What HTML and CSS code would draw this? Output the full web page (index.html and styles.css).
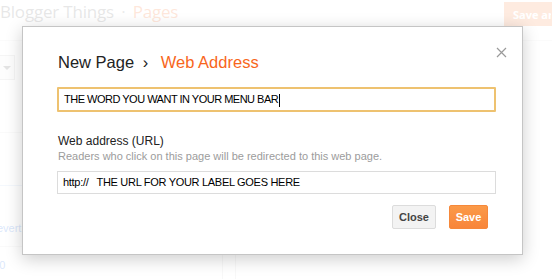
FILE: index.html
```html
<!DOCTYPE html>
<html lang="en">
<head>
  <meta charset="UTF-8">
  <title>Blogger - Pages</title>
  <link rel="stylesheet" href="styles.css">
</head>
<body>
  <div class="page">
    <div class="topbar">
      <h1 class="blog-title">Blogger Things <span class="dot">·</span> <span class="section">Pages</span></h1>
      <button class="save-arr">Save arrangement</button>
    </div>
    <div class="content">
      <div class="side">
        <div class="select"><span class="arrow"></span></div>
        <div class="rule first"></div>
        <div class="rule blue"></div>
        <div class="revert">Revert</div>
        <div class="rule"></div>
        <div class="num">100</div>
      </div>
      <div class="cols">
        <div class="col"></div>
        <div class="col"></div>
      </div>
    </div>
  </div>

  <div class="overlay"></div>

  <div class="dialog">
    <span class="close-x">
      <svg width="11" height="11" viewBox="0 0 11 11"><path d="M1 1L10 10M10 1L1 10" stroke="#9a9a9a" stroke-width="1.2" fill="none"/></svg>
    </span>
    <h2 class="dialog-title">New Page <span class="sep">›</span> <span class="accent">Web Address</span></h2>
    <div class="field focus">THE WORD YOU WANT IN YOUR MENU BAR<span class="caret"></span></div>
    <div class="label">Web address (URL)</div>
    <div class="hint">Readers who click on this page will be redirected to this web page.</div>
    <div class="field url">http://&nbsp;&nbsp; THE URL FOR YOUR LABEL GOES HERE</div>
    <div class="actions">
      <button class="btn">Close</button>
      <button class="btn primary">Save</button>
    </div>
  </div>
</body>
</html>
```

FILE: styles.css
```css
body {
  margin: 0;
  background: #fff;
  font-family: 'Liberation Sans', Arial, sans-serif;
  width: 552px;
  height: 279px;
  overflow: hidden;
  position: relative;
}
.page {
  height: 279px;
}
.topbar {
  display: flex;
  justify-content: space-between;
  align-items: flex-start;
  height: 40px;
  border-bottom: 1px solid #e8e8e8;
}
.blog-title {
  margin: 0;
  padding-top: 1px;
  font-family: 'Open Sans', sans-serif;
  font-weight: normal;
  font-size: 17px;
  line-height: 22px;
  color: #888;
  letter-spacing: -0.2px;
}
.blog-title .dot {
  color: #999;
  margin: 0 3px;
}
.blog-title .section {
  color: #f8864a;
}
.save-arr {
  margin-top: 2px;
  height: 24px;
  padding: 0 8px;
  border: 1px solid #f89a65;
  background: #f99c66;
  color: #fff;
  font-family: 'Open Sans', sans-serif;
  font-weight: bold;
  font-size: 11px;
  white-space: nowrap;
  width: 48px;
  overflow: hidden;
  text-align: left;
}
.content {
  display: flex;
}
.side {
  width: 222px;
  padding-top: 14px;
}
.select {
  width: 14px;
  height: 23px;
  border: 1px solid #ccc;
  border-left: none;
  background: #f5f5f5;
  position: relative;
}
.arrow {
  position: absolute;
  left: 3px;
  top: 10px;
  border-left: 4px solid transparent;
  border-right: 4px solid transparent;
  border-top: 4px solid #777;
}
.rule {
  border-top: 1px solid #e5e5e5;
  margin-top: 52px;
}
.rule.first {
  margin-top: 52px;
}
.rule.blue {
  border-color: #c9dcf5;
}
.revert {
  font-size: 11px;
  color: #4a86e8;
  margin-top: 36px;
  margin-left: -11px;
}
.side .rule:nth-of-type(5) {
  margin-top: 12px;
}
.num {
  font-size: 11px;
  color: #4a86e8;
  margin-top: 12px;
  margin-left: -13px;
}
.cols {
  display: flex;
  gap: 12px;
  padding-top: 213px;
}
.col {
  width: 0;
  height: 30px;
  border-left: 1px solid #ddd;
}
.overlay {
  position: absolute;
  inset: 0;
  background: rgba(255, 255, 255, 0.8);
}
.dialog {
  position: absolute;
  left: 22px;
  top: 26px;
  width: 438px;
  height: 203px;
  padding: 24px 26px 0 35px;
  background: #fff;
  border: 1px solid #c5c5c5;
  box-shadow: 0 4px 16px rgba(0, 0, 0, 0.2);
}
.close-x {
  position: absolute;
  right: 15px;
  top: 20px;
  line-height: 0;
}
.dialog-title {
  margin: 0;
  font-weight: normal;
  font-size: 16.5px;
  line-height: 22px;
  color: #222;
}
.dialog-title .sep {
  margin: 0 8px 0 4px;
}
.dialog-title .accent {
  color: #f8661c;
}
.field {
  box-sizing: border-box;
  margin-left: -1px;
  width: 439px;
  border: 1px solid #dcdcdc;
  font-size: 11px;
  letter-spacing: -0.5px;
  color: #000;
  padding: 0 5px;
  white-space: nowrap;
}
.field.focus {
  margin-top: 14px;
  height: 25px;
  line-height: 21px;
  border: 2px solid #eec270;
  border-radius: 1px;
}
.caret {
  display: inline-block;
  width: 1px;
  height: 13px;
  margin-left: 1px;
  background: #000;
  vertical-align: middle;
}
.label {
  margin-top: 22px;
  font-size: 12px;
  line-height: 15px;
  color: #222;
}
.hint {
  font-size: 11px;
  line-height: 14px;
  color: #9c9c9c;
}
.field.url {
  margin-top: 8px;
  height: 23px;
  line-height: 21px;
  letter-spacing: -0.3px;
}
.actions {
  display: flex;
  justify-content: flex-end;
  gap: 13px;
  margin-top: 11px;
  padding-right: 8px;
}
.btn {
  height: 24px;
  padding: 0 5px;
  border: 1px solid #dcdcdc;
  border-radius: 2px;
  background: #f3f3f3;
  color: #444;
  font-family: 'Liberation Sans', Arial, sans-serif;
  font-weight: bold;
  font-size: 11px;
  min-width: 44px;
}
.btn.primary {
  min-width: 39px;
  border-color: #f6883a;
  background: linear-gradient(#fb9a48, #f8853a);
  color: #fff;
}
```
